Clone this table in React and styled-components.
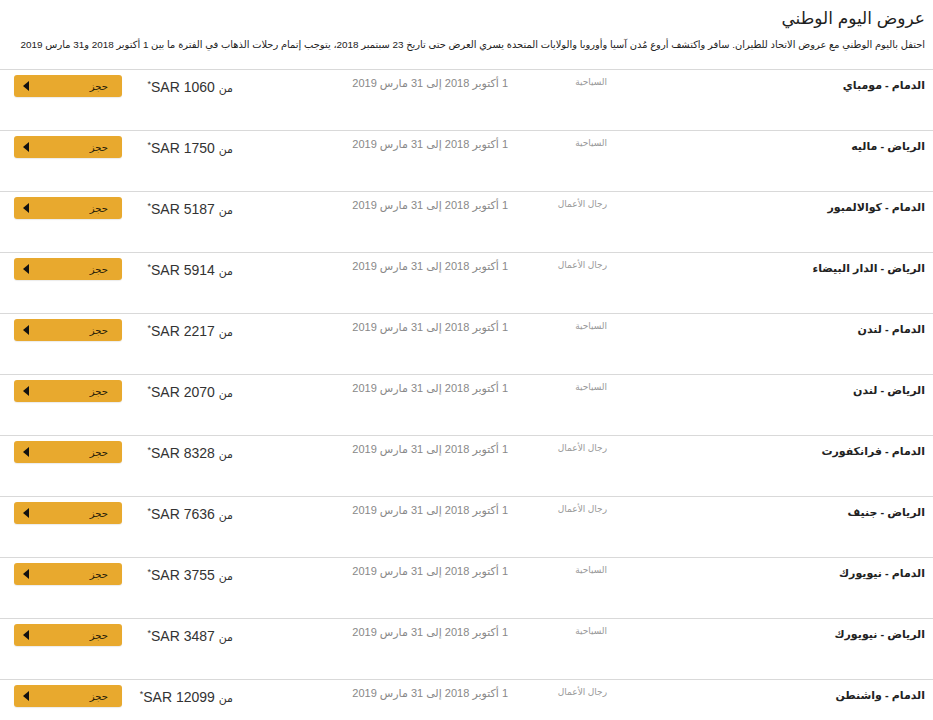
import React from 'react'
import styled, { createGlobalStyle } from 'styled-components'

const GlobalStyle = createGlobalStyle`
  body {
    margin: 0;
    background: #fff;
    font-family: "Liberation Sans", Arial, "DejaVu Sans", sans-serif;
    color: #333;
  }
`

const offers = [
  ['الدمام - مومباي', 'السياحية', '1060'],
  ['الرياض - ماليه', 'السياحية', '1750'],
  ['الدمام - كوالالمبور', 'رجال الأعمال', '5187'],
  ['الرياض - الدار البيضاء', 'رجال الأعمال', '5914'],
  ['الدمام - لندن', 'السياحية', '2217'],
  ['الرياض - لندن', 'السياحية', '2070'],
  ['الدمام - فرانكفورت', 'رجال الأعمال', '8328'],
  ['الرياض - جنيف', 'رجال الأعمال', '7636'],
  ['الدمام - نيويورك', 'السياحية', '3755'],
  ['الرياض - نيويورك', 'السياحية', '3487'],
  ['الدمام - واشنطن', 'رجال الأعمال', '12099'],
]

const App = () => {
  return (
    <Page dir="rtl">
      <GlobalStyle />
      <Header>
        <Title>عروض اليوم الوطني</Title>
        <Intro>
          احتفل باليوم الوطني مع عروض الاتحاد للطيران. سافر واكتشف أروع مُدن آسيا وأوروبا والولايات المتحدة يسري العرض حتى تاريخ 23 سبتمبر 2018، يتوجب إتمام رحلات الذهاب في الفترة ما بين 1 أكتوبر 2018 و31 مارس 2019
        </Intro>
      </Header>
      <List>
        {offers.map(([route, cabin, price], i) => (
          <Row key={i}>
            <Route>{route}</Route>
            <Cabin>{cabin}</Cabin>
            <Dates>1 أكتوبر 2018 إلى 31 مارس 2019</Dates>
            <Price>
              <From>من</From> {price} SAR<Star>*</Star>
            </Price>
            <BookButton>
              <span>حجز</span>
              <Arrow />
            </BookButton>
          </Row>
        ))}
      </List>
    </Page>
  )
}

export default App

const Page = styled.div`
  direction: rtl;
  width: 933px;
`

const Header = styled.div`
  padding: 8px 8px 0 8px;
  height: 69px;
  box-sizing: border-box;
`

const Title = styled.h1`
  margin: 0;
  font-size: 17px;
  font-weight: normal;
  color: #1e1e1e;
  line-height: 22px;
`

const Intro = styled.p`
  margin: 7px 0 0;
  font-size: 9.9px;
  line-height: 16px;
  color: #222;
  white-space: nowrap;
`

const List = styled.div`
  display: flex;
  flex-direction: column;
`

const Row = styled.div`
  display: grid;
  grid-template-columns: 326px 99px 275px 111px 108px;
  height: 61px;
  box-sizing: border-box;
  border-top: 1px solid #d9d9d9;
  padding: 5px 0 0;
  align-items: start;
`

const Route = styled.div`
  padding: 4px 8px 0 0;
  font-size: 11px;
  font-weight: bold;
  color: #222;
`

const Cabin = styled.div`
  padding: 2px 0 0;
  font-size: 9px;
  color: #999;
`

const Dates = styled.div`
  padding: 2px 0 0;
  font-size: 11px;
  color: #888;
`

const Price = styled.div`
  padding: 4px 0 0;
  font-size: 14px;
  color: #333;
`

const From = styled.span`
  font-size: 11px;
`

const Star = styled.sup`
  font-size: 9px;
  vertical-align: 5px;
`

const BookButton = styled.button`
  display: flex;
  align-items: center;
  justify-content: space-between;
  direction: rtl;
  width: 108px;
  height: 22px;
  padding: 0 14px 0 9px;
  border: none;
  border-radius: 3px;
  background: #e8a92e;
  box-shadow: 0 1px 1px rgba(0, 0, 0, 0.08);
  font-family: inherit;
  font-size: 10px;
  color: #2a1f0a;
  cursor: pointer;
`

const Arrow = styled.i`
  width: 0;
  height: 0;
  border-top: 5px solid transparent;
  border-bottom: 5px solid transparent;
  border-right: 6px solid #111;
`
